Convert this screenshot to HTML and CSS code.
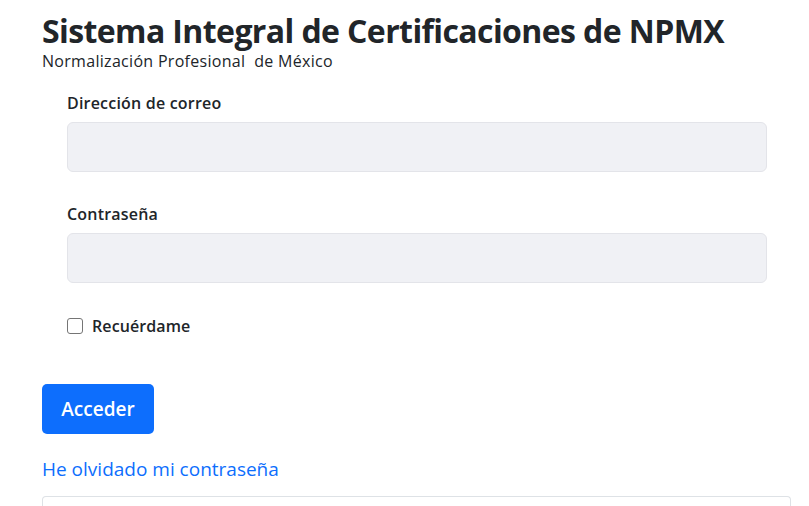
FILE: index.html
```html
<!DOCTYPE html>
<html lang="es">
<head>
<meta charset="utf-8">
<title>Sistema Integral de Certificaciones de NPMX</title>
<link rel="stylesheet" href="styles.css">
</head>
<body>
<main class="page">
  <header class="brand">
    <h1 class="brand-title">Sistema Integral de Certificaciones de NPMX</h1>
    <p class="brand-sub">Normalización Profesional&nbsp; de México</p>
  </header>

  <form class="login-form">
    <div class="field">
      <label class="field-label" for="email">Dirección de correo</label>
      <input class="field-input" id="email" type="email">
    </div>
    <div class="field">
      <label class="field-label" for="password">Contraseña</label>
      <input class="field-input" id="password" type="password">
    </div>
    <div class="check-row">
      <input class="check-box" id="remember" type="checkbox">
      <label class="check-label" for="remember">Recuérdame</label>
    </div>
  </form>

  <div class="actions">
    <button class="btn-primary" type="button">Acceder</button>
  </div>

  <a class="forgot-link" href="#">He olvidado mi contraseña</a>

  <section class="card"></section>
</main>
</body>
</html>
```
FILE: styles.css
```css
* { box-sizing: border-box; }

html, body {
  margin: 0;
  padding: 0;
  background: #ffffff;
}

body {
  font-family: "Open Sans", "Noto Sans", sans-serif;
  color: #212529;
  overflow: hidden;
}

.page {
  width: 749px;
  margin-left: 42px;
  padding-top: 12px;
}

.brand-title {
  margin: 0;
  font-size: 32px;
  font-weight: 700;
  line-height: 38px;
  letter-spacing: -0.6px;
  color: #212529;
}

.brand-sub {
  margin: 0;
  font-size: 16px;
  line-height: 22px;
  letter-spacing: 0.3px;
  color: #212529;
}

.login-form {
  margin: 19px 24px 0 25px;
}

.field {
  margin-bottom: 30px;
}

.field-label {
  display: block;
  margin-bottom: 7px;
  font-size: 16px;
  font-weight: 600;
  line-height: 24px;
  letter-spacing: 0.2px;
}

.field-input {
  display: block;
  width: 100%;
  height: 50px;
  margin: 0;
  padding: 0 16px;
  border: 1px solid #e3e4e9;
  border-radius: 6px;
  background: #f0f1f5;
  font: inherit;
}

.check-row {
  display: flex;
  align-items: flex-start;
  gap: 9px;
  margin-top: 31px;
  height: 24px;
}

.check-box {
  appearance: none;
  -webkit-appearance: none;
  width: 16px;
  height: 16px;
  margin: 4px 0 0 0;
  border: 1px solid #757575;
  border-radius: 3px;
  background: #ffffff;
  flex: none;
}

.check-label {
  font-size: 16px;
  font-weight: 600;
  line-height: 24px;
  letter-spacing: 0.1px;
}

.actions {
  margin-top: 46px;
}

.btn-primary {
  display: inline-flex;
  align-items: center;
  justify-content: center;
  width: 112px;
  height: 50px;
  margin: 0;
  padding: 0;
  border: 0;
  border-radius: 5px;
  background: #0d6efd;
  color: #ffffff;
  font-family: inherit;
  font-size: 19px;
  font-weight: 600;
}

.forgot-link {
  display: block;
  margin-top: 21px;
  font-size: 19px;
  line-height: 28px;
  color: #0d6efd;
  text-decoration: none;
}

.card {
  margin-top: 13px;
  height: 10px;
  border: 1px solid #dee2e6;
  border-bottom: 0;
  border-radius: 4px 4px 0 0;
}
```
